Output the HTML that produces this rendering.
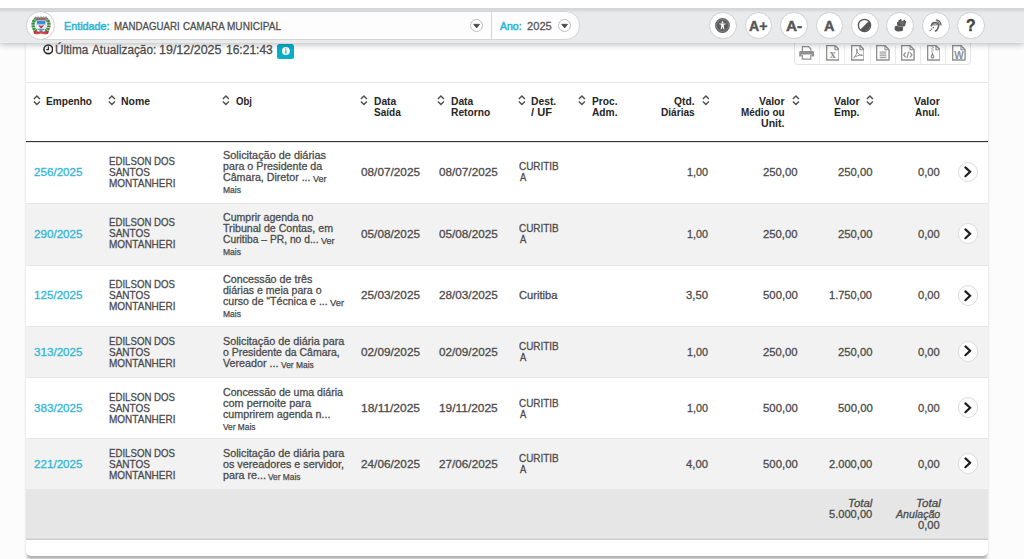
<!DOCTYPE html>
<html lang="pt-br"><head><meta charset="utf-8"><title>Diárias</title>
<style>
html,body{margin:0;padding:0}
body{width:1024px;height:559px;overflow:hidden;position:relative;background:#fcfcfc;font-family:'Liberation Sans',Arial,sans-serif}
.abs{position:absolute}
.t{position:absolute;white-space:nowrap;line-height:1;transform-origin:0 0;display:block}
#card{position:absolute;left:26px;top:40px;width:962px;height:515.5px;background:#fff;border-radius:0 0 5px 5px;box-shadow:0 0 4px rgba(0,0,0,.035),0 4px 3px -1.5px rgba(0,0,0,.3)}
#topwhite{position:absolute;left:0;top:0;width:1024px;height:8px;background:#fff}
#bar{position:absolute;left:0;top:8px;width:1024px;height:34.6px;background:linear-gradient(#d5d6d8 0,#d6d7d9 2px,#e6e7e8 4px,#e9eaeb 5.5px,#e9eaeb 100%);box-shadow:0 1px 7px rgba(0,0,0,.3)}
#pill{position:absolute;left:40px;top:10.8px;width:538px;height:26.9px;background:#fdfdfd;border:1px solid #d4d4d4;border-radius:0 14px 14px 0}
#pilldiv{position:absolute;left:491px;top:11.5px;width:1px;height:27.5px;background:#d4d4d4}
#logo{position:absolute;left:26px;top:11px;width:27px;height:27px;border-radius:50%;background:#fff;border:1px solid #cfcfcf}
.dd{position:absolute;top:18.8px;width:13px;height:13px}
.ac{position:absolute;top:11.7px;width:25.5px;height:25.5px;border-radius:50%;background:#fff;border:1px solid #cfcfcf}
.ac svg{position:absolute;left:0;top:0}
#exp{position:absolute;left:794.3px;top:40px;width:175px;height:23.5px;border:1px solid #e4e4e4;border-top:none;border-radius:0 0 4px 4px;background:#fff}
.exd{position:absolute;top:46px;width:1px;height:18px;background:#e9e9e9}
.ico{position:absolute;top:45.4px}
#info{position:absolute;left:277.3px;top:43.6px;width:16.5px;height:15.3px;border-radius:2.5px;background:#06aeca}
#info svg{position:absolute;left:4.55px;top:3.45px}
#thtop{position:absolute;left:26px;top:82px;width:962px;height:1px;background:#e6e6e6}
#thbot{position:absolute;left:26px;top:140.7px;width:962px;height:1.7px;background:#333}
.row{position:absolute;left:26px;width:962.3px;box-shadow:inset 0 1px 0 #e6e6e6}
#foot{position:absolute;left:26px;top:489px;width:962px;height:50.8px;background:#e6e6e6;box-shadow:inset 0 -1px 0 #cdcdcd,inset 0 -2px 0 #dadada}
.go{position:absolute;left:957.5px;width:18.6px;height:18.6px;border-radius:50%;background:#fff;border:1.5px solid #dcdcdc}
.go svg{position:absolute;left:-1.5px;top:-1.5px}
.sort{position:absolute;top:95.4px}

</style></head>
<body>
<div id="card"></div>
<div id="exp"></div>
<div id="info"><svg viewBox="0 0 8 8" width="7.8" height="7.8"><circle cx="4" cy="4" r="4" fill="#fff"/><circle cx="3.9" cy="2.0" r="0.65" fill="#06aeca"/><path d="M3.1 3.4 H4.5 V5.6 H5.0 V6.3 H3.0 V5.6 H3.5 V4.1 H3.1 Z" fill="#06aeca"/></svg></div>
<div id="thtop"></div>
<div class="row" style="top:142px;height:61px;background:#fff"></div>
<div class="go" style="top:161.85px"><svg viewBox="0 0 21.6 21.6" width="21.6" height="21.6"><path d="M8.4 6.4 L13.1 10.8 L8.4 15.2" fill="none" stroke="#1f1f1f" stroke-width="2.2" stroke-linecap="round" stroke-linejoin="miter"/></svg></div>
<div class="row" style="top:203px;height:62px;background:#f2f2f2"></div>
<div class="go" style="top:223.35px"><svg viewBox="0 0 21.6 21.6" width="21.6" height="21.6"><path d="M8.4 6.4 L13.1 10.8 L8.4 15.2" fill="none" stroke="#1f1f1f" stroke-width="2.2" stroke-linecap="round" stroke-linejoin="miter"/></svg></div>
<div class="row" style="top:265px;height:61px;background:#fff"></div>
<div class="go" style="top:285.23px"><svg viewBox="0 0 21.6 21.6" width="21.6" height="21.6"><path d="M8.4 6.4 L13.1 10.8 L8.4 15.2" fill="none" stroke="#1f1f1f" stroke-width="2.2" stroke-linecap="round" stroke-linejoin="miter"/></svg></div>
<div class="row" style="top:326px;height:51px;background:#f2f2f2"></div>
<div class="go" style="top:340.98px"><svg viewBox="0 0 21.6 21.6" width="21.6" height="21.6"><path d="M8.4 6.4 L13.1 10.8 L8.4 15.2" fill="none" stroke="#1f1f1f" stroke-width="2.2" stroke-linecap="round" stroke-linejoin="miter"/></svg></div>
<div class="row" style="top:377px;height:61px;background:#fff"></div>
<div class="go" style="top:397.23px"><svg viewBox="0 0 21.6 21.6" width="21.6" height="21.6"><path d="M8.4 6.4 L13.1 10.8 L8.4 15.2" fill="none" stroke="#1f1f1f" stroke-width="2.2" stroke-linecap="round" stroke-linejoin="miter"/></svg></div>
<div class="row" style="top:438px;height:51px;background:#f2f2f2"></div>
<div class="go" style="top:452.98px"><svg viewBox="0 0 21.6 21.6" width="21.6" height="21.6"><path d="M8.4 6.4 L13.1 10.8 L8.4 15.2" fill="none" stroke="#1f1f1f" stroke-width="2.2" stroke-linecap="round" stroke-linejoin="miter"/></svg></div>
<div id="foot"></div>
<div id="thbot"></div>
<svg class="sort" style="left:32.95px" viewBox="0 0 7.8 10.4" width="7.8" height="10.4"><path d="M0.9 4.0 L3.9 1.0 L6.9 4.0 M0.9 6.4 L3.9 9.4 L6.9 6.4" fill="none" stroke="#4d4d4d" stroke-width="1.4"/></svg>
<svg class="sort" style="left:107.95px" viewBox="0 0 7.8 10.4" width="7.8" height="10.4"><path d="M0.9 4.0 L3.9 1.0 L6.9 4.0 M0.9 6.4 L3.9 9.4 L6.9 6.4" fill="none" stroke="#4d4d4d" stroke-width="1.4"/></svg>
<svg class="sort" style="left:221.70px" viewBox="0 0 7.8 10.4" width="7.8" height="10.4"><path d="M0.9 4.0 L3.9 1.0 L6.9 4.0 M0.9 6.4 L3.9 9.4 L6.9 6.4" fill="none" stroke="#4d4d4d" stroke-width="1.4"/></svg>
<svg class="sort" style="left:360.20px" viewBox="0 0 7.8 10.4" width="7.8" height="10.4"><path d="M0.9 4.0 L3.9 1.0 L6.9 4.0 M0.9 6.4 L3.9 9.4 L6.9 6.4" fill="none" stroke="#4d4d4d" stroke-width="1.4"/></svg>
<svg class="sort" style="left:437.20px" viewBox="0 0 7.8 10.4" width="7.8" height="10.4"><path d="M0.9 4.0 L3.9 1.0 L6.9 4.0 M0.9 6.4 L3.9 9.4 L6.9 6.4" fill="none" stroke="#4d4d4d" stroke-width="1.4"/></svg>
<svg class="sort" style="left:517.95px" viewBox="0 0 7.8 10.4" width="7.8" height="10.4"><path d="M0.9 4.0 L3.9 1.0 L6.9 4.0 M0.9 6.4 L3.9 9.4 L6.9 6.4" fill="none" stroke="#4d4d4d" stroke-width="1.4"/></svg>
<svg class="sort" style="left:578.45px" viewBox="0 0 7.8 10.4" width="7.8" height="10.4"><path d="M0.9 4.0 L3.9 1.0 L6.9 4.0 M0.9 6.4 L3.9 9.4 L6.9 6.4" fill="none" stroke="#4d4d4d" stroke-width="1.4"/></svg>
<svg class="sort" style="left:701.70px" viewBox="0 0 7.8 10.4" width="7.8" height="10.4"><path d="M0.9 4.0 L3.9 1.0 L6.9 4.0 M0.9 6.4 L3.9 9.4 L6.9 6.4" fill="none" stroke="#4d4d4d" stroke-width="1.4"/></svg>
<svg class="sort" style="left:792.20px" viewBox="0 0 7.8 10.4" width="7.8" height="10.4"><path d="M0.9 4.0 L3.9 1.0 L6.9 4.0 M0.9 6.4 L3.9 9.4 L6.9 6.4" fill="none" stroke="#4d4d4d" stroke-width="1.4"/></svg>
<svg class="sort" style="left:866.45px" viewBox="0 0 7.8 10.4" width="7.8" height="10.4"><path d="M0.9 4.0 L3.9 1.0 L6.9 4.0 M0.9 6.4 L3.9 9.4 L6.9 6.4" fill="none" stroke="#4d4d4d" stroke-width="1.4"/></svg>
<div class="exd" style="left:818.9px"></div>
<div class="exd" style="left:843.9px"></div>
<div class="exd" style="left:869.6px"></div>
<div class="exd" style="left:895.0px"></div>
<div class="exd" style="left:920.2px"></div>
<div class="exd" style="left:945.4px"></div>
<svg class="ico" style="left:799.40px;top:46.2px" viewBox="0 0 15.2 14" width="15.2" height="14">
<path d="M3.4 5.4 V0.7 H9.6 L11.8 2.9 V5.4" fill="#fff" stroke="#909090" stroke-width="1.2"/>
<path d="M1.6 5.0 H13.6 Q15.0 5.0 15.0 6.4 V10.6 H12.6 V8.6 H2.6 V10.6 H0.2 V6.4 Q0.2 5.0 1.6 5.0 Z" fill="#909090"/>
<path d="M3.4 9.0 V13.2 H11.8 V9.0" fill="#fff" stroke="#909090" stroke-width="1.2"/></svg>
<svg class="ico" style="left:825.55px" viewBox="0 0 13.7 15.6" width="13.7" height="15.6"><path d="M0.6 0.6 H9.0 L13.1 4.7 V15.0 H0.6 Z" fill="#fff" stroke="#909090" stroke-width="1.4" stroke-linejoin="round"/><path d="M9.0 0.6 V4.7 H13.1" fill="none" stroke="#909090" stroke-width="1.15"/><text x="6.7" y="13.0" font-family="Liberation Serif,serif" font-weight="700" font-size="12" text-anchor="middle" fill="#909090">x</text></svg>
<svg class="ico" style="left:850.55px" viewBox="0 0 13.7 15.6" width="13.7" height="15.6"><path d="M0.6 0.6 H9.0 L13.1 4.7 V15.0 H0.6 Z" fill="#fff" stroke="#909090" stroke-width="1.4" stroke-linejoin="round"/><path d="M9.0 0.6 V4.7 H13.1" fill="none" stroke="#909090" stroke-width="1.15"/><path d="M2.7 12.7 C4.6 11.4 6.2 8.3 6.3 4.6 C6.3 3.6 5.4 3.7 5.5 4.8 C5.8 8.0 8.3 10.3 11.2 10.6 C12.0 10.6 11.8 9.8 10.9 9.9 C8.3 10.0 4.8 11.2 2.7 12.7 Z" fill="none" stroke="#909090" stroke-width="1.0"/></svg>
<svg class="ico" style="left:876.05px" viewBox="0 0 13.7 15.6" width="13.7" height="15.6"><path d="M0.6 0.6 H9.0 L13.1 4.7 V15.0 H0.6 Z" fill="#fff" stroke="#909090" stroke-width="1.4" stroke-linejoin="round"/><path d="M9.0 0.6 V4.7 H13.1" fill="none" stroke="#909090" stroke-width="1.15"/><path d="M3.6 7.0 H10.3 M3.6 8.9 H10.3 M3.6 10.8 H10.3 M3.6 12.7 H10.3" stroke="#909090" stroke-width="1.0"/></svg>
<svg class="ico" style="left:901.35px" viewBox="0 0 13.7 15.6" width="13.7" height="15.6"><path d="M0.6 0.6 H9.0 L13.1 4.7 V15.0 H0.6 Z" fill="#fff" stroke="#909090" stroke-width="1.4" stroke-linejoin="round"/><path d="M9.0 0.6 V4.7 H13.1" fill="none" stroke="#909090" stroke-width="1.15"/><path d="M4.7 7.4 L2.7 9.9 L4.7 12.4 M9.0 7.4 L11.0 9.9 L9.0 12.4 M7.7 6.7 L6.0 13.1" fill="none" stroke="#909090" stroke-width="1.25"/></svg>
<svg class="ico" style="left:926.55px" viewBox="0 0 13.7 15.6" width="13.7" height="15.6"><path d="M0.6 0.6 H9.0 L13.1 4.7 V15.0 H0.6 Z" fill="#fff" stroke="#909090" stroke-width="1.4" stroke-linejoin="round"/><path d="M9.0 0.6 V4.7 H13.1" fill="none" stroke="#909090" stroke-width="1.15"/><path d="M4.3 1.4 H5.5 M5.5 2.6 H6.7 M4.3 3.8 H5.5 M5.5 5.0 H6.7 M4.3 6.2 H5.5" stroke="#909090" stroke-width="1.0"/><path d="M5.5 6.8 L7.1 11.0 A1.8 1.8 0 1 1 3.9 11.0 Z" fill="#909090"/><circle cx="5.5" cy="11.6" r="0.7" fill="#fff"/></svg>
<svg class="ico" style="left:951.95px" viewBox="0 0 13.7 15.6" width="13.7" height="15.6"><path d="M0.6 0.6 H9.0 L13.1 4.7 V15.0 H0.6 Z" fill="#fff" stroke="#909090" stroke-width="1.4" stroke-linejoin="round"/><path d="M9.0 0.6 V4.7 H13.1" fill="none" stroke="#909090" stroke-width="1.15"/><text x="6.9" y="14.0" font-family="Liberation Sans,sans-serif" font-weight="700" font-size="10" text-anchor="middle" fill="#909090">W</text></svg><svg class="abs" style="left:42.6px;top:44.2px" viewBox="0 0 10.6 10.6" width="10.6" height="10.6"><circle cx="5.3" cy="5.3" r="4.35" fill="none" stroke="#2e2e2e" stroke-width="1.6"/><path d="M5.4 2.5 V5.7 H3.2" fill="none" stroke="#2e2e2e" stroke-width="1.25"/></svg>
<div id="bar"></div>
<div id="topwhite"></div>
<div id="pill"></div><div id="pilldiv"></div>
<div id="logo"><svg viewBox="0 0 28 28" width="28" height="28" style="position:absolute;left:-0.5px;top:-0.5px">
<g fill="none" stroke="#2f8f3e" stroke-width="3.4" stroke-dasharray="2.1 0.5"><path d="M9.4 6.6 C6.2 8.6 5.4 12.6 6.6 15.8 C7.3 17.6 8.6 18.8 10.4 19.4"/><path d="M18.6 6.6 C21.8 8.6 22.6 12.6 21.4 15.8 C20.7 17.6 19.4 18.8 17.6 19.4"/></g>
<g fill="#c7363b"><circle cx="6.6" cy="10.0" r="0.55"/><circle cx="21.4" cy="10.0" r="0.55"/><circle cx="6.4" cy="14.4" r="0.55"/><circle cx="21.6" cy="14.4" r="0.55"/></g>
<path d="M7.9 4.4 H9.3 V5.2 H10.5 V4.4 H12.0 V5.2 H13.2 V4.4 H14.8 V5.2 H16.0 V4.4 H17.5 V5.2 H18.7 V4.4 H20.1 V8.4 H7.9 Z" fill="#8b8b8b" transform="translate(-0.0 0)"/>
<path d="M9.4 7.0 H18.7" stroke="#c43c40" stroke-width="1.3" stroke-dasharray="1.5 0.9"/>
<path d="M9.7 8.7 H18.5 V14.8 C18.5 17.4 16.0 18.6 14.1 19.1 C12.2 18.6 9.7 17.4 9.7 14.8 Z" fill="#3a9bd8"/>
<path d="M10.3 10.3 H17.9" stroke="#2a6fae" stroke-width="1.1" stroke-dasharray="1.2 1"/>
<path d="M9.7 12.5 H18.5 V16.0 C18.2 16.3 18.0 16.5 17.7 16.7 H10.5 C10.2 16.5 10.0 16.3 9.7 16.0 Z" fill="#f6f8fa"/>
<path d="M11.5 13.3 C12.3 13.0 13.3 13.3 14.1 13.9 C14.9 13.3 15.9 13.0 16.7 13.3 C16.4 14.6 15.2 15.6 14.1 16.4 C13.0 15.6 11.8 14.6 11.5 13.3 Z" fill="#d32536"/>
<path d="M6.3 18.6 C8.6 20.0 11.6 19.7 14.1 19.0 C16.6 19.7 19.6 20.0 21.9 18.6 L21.3 21.4 C19.0 22.6 16.4 22.4 14.1 21.6 C11.8 22.4 9.2 22.6 6.9 21.4 Z" fill="#c8262f"/>
<path d="M8.6 21.0 C10.4 21.5 12.4 21.2 14.1 20.6 C15.8 21.2 17.8 21.5 19.6 21.0" fill="none" stroke="#e9a0a4" stroke-width="0.5"/>
</svg></div>
<svg class="dd" style="left:470.4px" viewBox="0 0 13 13"><circle cx="6.5" cy="6.5" r="6" fill="#fff" stroke="#bdbdbd" stroke-width="1"/><path d="M3.6 5.3 H9.6 L6.6 8.9 Z" fill="#444" stroke="#444" stroke-width="0.7" stroke-linejoin="round"/></svg><svg class="dd" style="left:558.0px" viewBox="0 0 13 13"><circle cx="6.5" cy="6.5" r="6" fill="#fff" stroke="#bdbdbd" stroke-width="1"/><path d="M3.6 5.3 H9.6 L6.6 8.9 Z" fill="#444" stroke="#444" stroke-width="0.7" stroke-linejoin="round"/></svg>
<div class="ac" style="left:709.10px"><svg viewBox="0 0 27 27" width="27" height="27" style="left:-1px;top:-1px"><circle cx="13.5" cy="13.5" r="7.4" fill="#5a5a5a"/><circle cx="13.5" cy="13.5" r="6.1" fill="none" stroke="#a3a3a3" stroke-width="0.6"/>
<g transform="translate(13.5 13.7) scale(0.84) translate(-13.5 -13.7)"><circle cx="13.5" cy="9.6" r="1.1" fill="#fff"/><path d="M9.6 11.2 L17.4 11.2 L17.4 12.1 L14.8 12.6 L15.7 17.9 L14.8 18.1 L13.5 15.0 L12.2 18.1 L11.3 17.9 L12.2 12.6 L9.6 12.1 Z" fill="#fff"/></g></svg></div>
<div class="ac" style="left:744.90px"></div>
<div class="ac" style="left:780.10px"></div>
<div class="ac" style="left:815.50px"></div>
<div class="ac" style="left:851.10px"><svg viewBox="0 0 27 27" width="27" height="27" style="left:-1px;top:-1px"><circle cx="13.5" cy="13.4" r="6.1" fill="#fff" stroke="#555" stroke-width="1.35"/><path d="M9.2 17.7 A6.1 6.1 0 0 0 17.8 9.1 Z" fill="#555"/></svg></div>
<div class="ac" style="left:886.40px"><svg viewBox="0 0 27 27" width="27" height="27" style="left:-1px;top:-1px"><g fill="#575757"><path d="M9.0 14.6 C8.3 15.6 8.4 17.6 9.4 18.5 C10.3 19.4 11.5 19.7 12.8 19.5 L16.4 19.0 C17.1 18.9 17.2 18.0 16.6 17.8 C17.3 17.6 17.4 16.7 16.8 16.5 C17.5 16.2 17.4 15.3 16.7 15.2 L16.9 14.4 L12.0 14.2 C11.0 13.6 9.8 13.8 9.0 14.6 Z"/>
<path d="M11.2 13.8 L10.9 10.8 C10.8 10.0 11.8 9.7 12.2 10.3 L12.4 8.4 C12.5 7.6 13.5 7.5 13.8 8.2 L14.2 7.4 C14.6 6.8 15.5 7.0 15.6 7.7 L15.9 9.5 L18.0 7.9 C18.7 7.4 19.5 8.2 19.0 8.9 L19.6 8.9 C20.1 8.9 20.3 9.4 20.1 9.8 L19.2 13.2 C19.0 14.1 18.4 14.5 17.6 14.6 Z"/></g>
<path d="M13.3 10.0 L17.2 13.2 M14.8 9.2 L18.2 12.0" stroke="#a5a5a5" stroke-width="0.5" fill="none"/></svg></div>
<div class="ac" style="left:922.00px"><svg viewBox="0 0 27 27" width="27" height="27" style="left:-1px;top:-1px"><g fill="none" stroke="#5a5a5a" stroke-linecap="round"><path d="M9.4 13.8 A3.7 3.7 0 0 1 16.7 13.6 C16.7 15.4 15.7 16.1 15.3 17.2 C14.9 18.4 14.3 19.0 13.3 19.0" stroke-width="1.45"/>
<path d="M10.9 13.4 A2.1 2.1 0 0 1 15.0 13.2" stroke-width="0.95" stroke="#777"/>
<path d="M14.3 7.9 A6.1 6.1 0 0 1 19.1 12.9" stroke-width="1.2"/><path d="M14.9 9.2 A4.95 4.95 0 0 1 17.85 12.7" stroke-width="0.8"/></g>
<g fill="#5a5a5a"><circle cx="12.9" cy="13.0" r="0.65"/><circle cx="8.2" cy="18.5" r="0.7"/><circle cx="9.75" cy="16.95" r="0.7"/><circle cx="11.4" cy="15.5" r="0.7"/></g></svg></div>
<div class="ac" style="left:957.40px"></div>
<span class="t" id="t0" style="left:63.70px;top:21.12px;font-size:11.2px;color:#2fb6d6;-webkit-text-stroke:0.55px #2fb6d6;transform:scaleX(0.9644);">Entidade:</span>
<span class="t" id="t1" style="left:114.10px;top:21.12px;font-size:11.2px;color:#4d4d4d;-webkit-text-stroke:0.28px #4d4d4d;transform:scaleX(0.8676);">MANDAGUARI</span>
<span class="t" id="t2" style="left:182.50px;top:21.12px;font-size:11.2px;color:#4d4d4d;-webkit-text-stroke:0.28px #4d4d4d;transform:scaleX(0.8710);">CAMARA</span>
<span class="t" id="t3" style="left:227.00px;top:21.12px;font-size:11.2px;color:#4d4d4d;-webkit-text-stroke:0.28px #4d4d4d;transform:scaleX(0.8986);">MUNICIPAL</span>
<span class="t" id="t4" style="left:500.10px;top:21.12px;font-size:11.2px;color:#2fb6d6;-webkit-text-stroke:0.55px #2fb6d6;transform:scaleX(0.9385);">Ano:</span>
<span class="t" id="t5" style="left:526.60px;top:21.12px;font-size:11.2px;color:#555;-webkit-text-stroke:0.28px #555;transform:scaleX(0.9964);">2025</span>
<span class="t" id="t6" style="left:55.40px;top:44.32px;font-size:12.5px;color:#4a4a4a;-webkit-text-stroke:0.28px #4a4a4a;transform:scaleX(0.9401);">Última</span>
<span class="t" id="t7" style="left:91.65px;top:44.32px;font-size:12.5px;color:#4a4a4a;-webkit-text-stroke:0.28px #4a4a4a;transform:scaleX(0.9433);">Atualização:</span>
<span class="t" id="t8" style="left:158.80px;top:44.32px;font-size:12.5px;color:#4a4a4a;-webkit-text-stroke:0.28px #4a4a4a;transform:scaleX(0.9990);">19/12/2025</span>
<span class="t" id="t9" style="left:225.50px;top:44.32px;font-size:12.5px;color:#4a4a4a;-webkit-text-stroke:0.28px #4a4a4a;transform:scaleX(0.9615);">16:21:43</span>
<span class="t" id="t10" style="left:749.10px;top:17.78px;font-size:15.5px;color:#555;font-weight:700;-webkit-text-stroke:0.45px #555;transform:scaleX(0.9086);">A+</span>
<span class="t" id="t11" style="left:785.60px;top:17.78px;font-size:15.5px;color:#555;font-weight:700;-webkit-text-stroke:0.45px #555;transform:scaleX(0.9903);">A-</span>
<span class="t" id="t12" style="left:823.90px;top:17.78px;font-size:15.5px;color:#555;font-weight:700;-webkit-text-stroke:0.45px #555;transform:scaleX(0.9372);">A</span>
<span class="t" id="t13" style="left:966.00px;top:17.21px;font-size:17px;color:#444;font-weight:700;-webkit-text-stroke:0.45px #444;transform:scaleX(0.9239);">?</span>
<span class="t" id="t14" style="left:46.40px;top:95.59px;font-size:11px;color:#262626;font-weight:700;transform:scaleX(0.9177);">Empenho</span>
<span class="t" id="t15" style="left:121.40px;top:95.59px;font-size:11px;color:#262626;font-weight:700;transform:scaleX(0.9489);">Nome</span>
<span class="t" id="t16" style="left:235.65px;top:95.59px;font-size:11px;color:#262626;font-weight:700;transform:scaleX(0.8722);">Obj</span>
<span class="t" id="t17" style="left:373.65px;top:95.59px;font-size:11px;color:#262626;font-weight:700;transform:scaleX(0.9332);">Data</span>
<span class="t" id="t18" style="left:373.65px;top:106.59px;font-size:11px;color:#262626;font-weight:700;transform:scaleX(0.9111);">Saída</span>
<span class="t" id="t19" style="left:450.65px;top:95.59px;font-size:11px;color:#262626;font-weight:700;transform:scaleX(0.9332);">Data</span>
<span class="t" id="t20" style="left:450.65px;top:106.59px;font-size:11px;color:#262626;font-weight:700;transform:scaleX(0.9307);">Retorno</span>
<span class="t" id="t21" style="left:531.40px;top:95.59px;font-size:11px;color:#262626;font-weight:700;transform:scaleX(0.9384);">Dest.</span>
<span class="t" id="t22" style="left:531.40px;top:106.59px;font-size:11px;color:#262626;font-weight:700;transform:scaleX(1.0105);">/ UF</span>
<span class="t" id="t23" style="left:592.40px;top:95.59px;font-size:11px;color:#262626;font-weight:700;transform:scaleX(0.9267);">Proc.</span>
<span class="t" id="t24" style="left:592.40px;top:106.59px;font-size:11px;color:#262626;font-weight:700;transform:scaleX(0.9273);">Adm.</span>
<span class="t" id="t25" style="left:674.20px;top:95.59px;font-size:11px;color:#262626;font-weight:700;transform:scaleX(0.9318);">Qtd.</span>
<span class="t" id="t26" style="left:660.95px;top:106.59px;font-size:11px;color:#262626;font-weight:700;transform:scaleX(0.9195);">Diárias</span>
<span class="t" id="t27" style="left:759.20px;top:95.59px;font-size:11px;color:#262626;font-weight:700;transform:scaleX(0.9477);">Valor</span>
<span class="t" id="t28" style="left:741.20px;top:106.59px;font-size:11px;color:#262626;font-weight:700;transform:scaleX(0.9010);">Médio ou</span>
<span class="t" id="t29" style="left:761.20px;top:117.59px;font-size:11px;color:#262626;font-weight:700;transform:scaleX(0.9610);">Unit.</span>
<span class="t" id="t30" style="left:833.95px;top:95.59px;font-size:11px;color:#262626;font-weight:700;transform:scaleX(0.9477);">Valor</span>
<span class="t" id="t31" style="left:833.95px;top:106.59px;font-size:11px;color:#262626;font-weight:700;transform:scaleX(0.9477);">Emp.</span>
<span class="t" id="t32" style="left:914.20px;top:95.59px;font-size:11px;color:#262626;font-weight:700;transform:scaleX(0.9570);">Valor</span>
<span class="t" id="t33" style="left:915.20px;top:106.59px;font-size:11px;color:#262626;font-weight:700;transform:scaleX(0.9000);">Anul.</span>
<span class="t" id="t34" style="left:34.40px;top:167.09px;font-size:11px;color:#2fb6d6;-webkit-text-stroke:0.28px #2fb6d6;transform:scaleX(1.0569);">256/2025</span>
<span class="t" id="t35" style="left:109.40px;top:156.68px;font-size:10.3px;color:#4b4b4b;-webkit-text-stroke:0.28px #4b4b4b;transform:scaleX(0.9376);">EDILSON DOS</span>
<span class="t" id="t36" style="left:109.40px;top:167.68px;font-size:10.3px;color:#4b4b4b;-webkit-text-stroke:0.28px #4b4b4b;transform:scaleX(0.9726);">SANTOS</span>
<span class="t" id="t37" style="left:109.40px;top:178.68px;font-size:10.3px;color:#4b4b4b;-webkit-text-stroke:0.28px #4b4b4b;transform:scaleX(0.9715);">MONTANHERI</span>
<span class="t" id="t38" style="left:223.40px;top:151.18px;font-size:10.3px;color:#4b4b4b;-webkit-text-stroke:0.28px #4b4b4b;transform:scaleX(1.0584);">Solicitação de diárias</span>
<span class="t" id="t39" style="left:223.40px;top:162.18px;font-size:10.3px;color:#4b4b4b;-webkit-text-stroke:0.28px #4b4b4b;transform:scaleX(1.0381);">para o Presidente da</span>
<span class="t" id="t40" style="left:223.40px;top:173.18px;font-size:10.3px;color:#4b4b4b;-webkit-text-stroke:0.28px #4b4b4b;transform:scaleX(1.0332);">Câmara, Diretor ...</span>
<span class="t" id="t41" style="left:312.90px;top:175.34px;font-size:8.7px;color:#4b4b4b;-webkit-text-stroke:0.25px #4b4b4b;transform:scaleX(1.0347);">Ver</span>
<span class="t" id="t42" style="left:223.40px;top:186.34px;font-size:8.7px;color:#4b4b4b;-webkit-text-stroke:0.25px #4b4b4b;transform:scaleX(0.9813);">Mais</span>
<span class="t" id="t43" style="left:361.40px;top:167.09px;font-size:11px;color:#4b4b4b;-webkit-text-stroke:0.28px #4b4b4b;transform:scaleX(1.0715);">08/07/2025</span>
<span class="t" id="t44" style="left:438.65px;top:167.09px;font-size:11px;color:#4b4b4b;-webkit-text-stroke:0.28px #4b4b4b;transform:scaleX(1.0670);">08/07/2025</span>
<span class="t" id="t45" style="left:518.90px;top:162.18px;font-size:10.3px;color:#4b4b4b;-webkit-text-stroke:0.28px #4b4b4b;transform:scaleX(0.9647);">CURITIB</span>
<span class="t" id="t46" style="left:519.50px;top:173.18px;font-size:10.3px;color:#4b4b4b;-webkit-text-stroke:0.28px #4b4b4b;transform:scaleX(0.9164);">A</span>
<span class="t" id="t47" style="left:686.70px;top:167.09px;font-size:11px;color:#4b4b4b;-webkit-text-stroke:0.28px #4b4b4b;transform:scaleX(0.9803);">1,00</span>
<span class="t" id="t48" style="left:763.10px;top:167.09px;font-size:11px;color:#4b4b4b;-webkit-text-stroke:0.28px #4b4b4b;transform:scaleX(1.0280);">250,00</span>
<span class="t" id="t49" style="left:837.85px;top:167.09px;font-size:11px;color:#4b4b4b;-webkit-text-stroke:0.28px #4b4b4b;transform:scaleX(1.0280);">250,00</span>
<span class="t" id="t50" style="left:918.45px;top:167.09px;font-size:11px;color:#4b4b4b;-webkit-text-stroke:0.28px #4b4b4b;transform:scaleX(1.0153);">0,00</span>
<span class="t" id="t51" style="left:34.40px;top:228.59px;font-size:11px;color:#2fb6d6;-webkit-text-stroke:0.28px #2fb6d6;transform:scaleX(1.0569);">290/2025</span>
<span class="t" id="t52" style="left:109.40px;top:218.18px;font-size:10.3px;color:#4b4b4b;-webkit-text-stroke:0.28px #4b4b4b;transform:scaleX(0.9376);">EDILSON DOS</span>
<span class="t" id="t53" style="left:109.40px;top:229.18px;font-size:10.3px;color:#4b4b4b;-webkit-text-stroke:0.28px #4b4b4b;transform:scaleX(0.9726);">SANTOS</span>
<span class="t" id="t54" style="left:109.40px;top:240.18px;font-size:10.3px;color:#4b4b4b;-webkit-text-stroke:0.28px #4b4b4b;transform:scaleX(0.9715);">MONTANHERI</span>
<span class="t" id="t55" style="left:223.40px;top:212.68px;font-size:10.3px;color:#4b4b4b;-webkit-text-stroke:0.28px #4b4b4b;transform:scaleX(1.0266);">Cumprir agenda no</span>
<span class="t" id="t56" style="left:223.40px;top:223.68px;font-size:10.3px;color:#4b4b4b;-webkit-text-stroke:0.28px #4b4b4b;transform:scaleX(1.0314);">Tribunal de Contas, em</span>
<span class="t" id="t57" style="left:223.40px;top:234.68px;font-size:10.3px;color:#4b4b4b;-webkit-text-stroke:0.28px #4b4b4b;transform:scaleX(0.9992);">Curitiba – PR, no d...</span>
<span class="t" id="t58" style="left:320.90px;top:236.84px;font-size:8.7px;color:#4b4b4b;-webkit-text-stroke:0.25px #4b4b4b;transform:scaleX(1.0347);">Ver</span>
<span class="t" id="t59" style="left:223.40px;top:247.84px;font-size:8.7px;color:#4b4b4b;-webkit-text-stroke:0.25px #4b4b4b;transform:scaleX(0.9813);">Mais</span>
<span class="t" id="t60" style="left:361.40px;top:228.59px;font-size:11px;color:#4b4b4b;-webkit-text-stroke:0.28px #4b4b4b;transform:scaleX(1.0715);">05/08/2025</span>
<span class="t" id="t61" style="left:438.65px;top:228.59px;font-size:11px;color:#4b4b4b;-webkit-text-stroke:0.28px #4b4b4b;transform:scaleX(1.0670);">05/08/2025</span>
<span class="t" id="t62" style="left:518.90px;top:223.68px;font-size:10.3px;color:#4b4b4b;-webkit-text-stroke:0.28px #4b4b4b;transform:scaleX(0.9647);">CURITIB</span>
<span class="t" id="t63" style="left:519.50px;top:234.68px;font-size:10.3px;color:#4b4b4b;-webkit-text-stroke:0.28px #4b4b4b;transform:scaleX(0.9164);">A</span>
<span class="t" id="t64" style="left:686.70px;top:228.59px;font-size:11px;color:#4b4b4b;-webkit-text-stroke:0.28px #4b4b4b;transform:scaleX(0.9803);">1,00</span>
<span class="t" id="t65" style="left:763.10px;top:228.59px;font-size:11px;color:#4b4b4b;-webkit-text-stroke:0.28px #4b4b4b;transform:scaleX(1.0280);">250,00</span>
<span class="t" id="t66" style="left:837.85px;top:228.59px;font-size:11px;color:#4b4b4b;-webkit-text-stroke:0.28px #4b4b4b;transform:scaleX(1.0280);">250,00</span>
<span class="t" id="t67" style="left:918.45px;top:228.59px;font-size:11px;color:#4b4b4b;-webkit-text-stroke:0.28px #4b4b4b;transform:scaleX(1.0153);">0,00</span>
<span class="t" id="t68" style="left:34.40px;top:290.46px;font-size:11px;color:#2fb6d6;-webkit-text-stroke:0.28px #2fb6d6;transform:scaleX(1.0569);">125/2025</span>
<span class="t" id="t69" style="left:109.40px;top:280.06px;font-size:10.3px;color:#4b4b4b;-webkit-text-stroke:0.28px #4b4b4b;transform:scaleX(0.9376);">EDILSON DOS</span>
<span class="t" id="t70" style="left:109.40px;top:291.06px;font-size:10.3px;color:#4b4b4b;-webkit-text-stroke:0.28px #4b4b4b;transform:scaleX(0.9726);">SANTOS</span>
<span class="t" id="t71" style="left:109.40px;top:302.06px;font-size:10.3px;color:#4b4b4b;-webkit-text-stroke:0.28px #4b4b4b;transform:scaleX(0.9715);">MONTANHERI</span>
<span class="t" id="t72" style="left:223.40px;top:274.56px;font-size:10.3px;color:#4b4b4b;-webkit-text-stroke:0.28px #4b4b4b;transform:scaleX(1.0395);">Concessão de três</span>
<span class="t" id="t73" style="left:223.40px;top:285.56px;font-size:10.3px;color:#4b4b4b;-webkit-text-stroke:0.28px #4b4b4b;transform:scaleX(1.0244);">diárias e meia para o</span>
<span class="t" id="t74" style="left:223.40px;top:296.56px;font-size:10.3px;color:#4b4b4b;-webkit-text-stroke:0.28px #4b4b4b;transform:scaleX(1.0282);">curso de “Técnica e ...</span>
<span class="t" id="t75" style="left:329.90px;top:298.71px;font-size:8.7px;color:#4b4b4b;-webkit-text-stroke:0.25px #4b4b4b;transform:scaleX(1.0731);">Ver</span>
<span class="t" id="t76" style="left:223.40px;top:309.71px;font-size:8.7px;color:#4b4b4b;-webkit-text-stroke:0.25px #4b4b4b;transform:scaleX(0.9813);">Mais</span>
<span class="t" id="t77" style="left:361.40px;top:290.46px;font-size:11px;color:#4b4b4b;-webkit-text-stroke:0.28px #4b4b4b;transform:scaleX(1.0715);">25/03/2025</span>
<span class="t" id="t78" style="left:438.65px;top:290.46px;font-size:11px;color:#4b4b4b;-webkit-text-stroke:0.28px #4b4b4b;transform:scaleX(1.0670);">28/03/2025</span>
<span class="t" id="t79" style="left:518.90px;top:291.06px;font-size:10.3px;color:#4b4b4b;-webkit-text-stroke:0.28px #4b4b4b;transform:scaleX(1.0850);">Curitiba</span>
<span class="t" id="t80" style="left:685.70px;top:290.46px;font-size:11px;color:#4b4b4b;-webkit-text-stroke:0.28px #4b4b4b;transform:scaleX(1.0270);">3,50</span>
<span class="t" id="t81" style="left:762.90px;top:290.46px;font-size:11px;color:#4b4b4b;-webkit-text-stroke:0.28px #4b4b4b;transform:scaleX(1.0340);">500,00</span>
<span class="t" id="t82" style="left:829.45px;top:290.46px;font-size:11px;color:#4b4b4b;-webkit-text-stroke:0.28px #4b4b4b;transform:scaleX(1.0040);">1.750,00</span>
<span class="t" id="t83" style="left:918.45px;top:290.46px;font-size:11px;color:#4b4b4b;-webkit-text-stroke:0.28px #4b4b4b;transform:scaleX(1.0153);">0,00</span>
<span class="t" id="t84" style="left:34.40px;top:347.21px;font-size:11px;color:#2fb6d6;-webkit-text-stroke:0.28px #2fb6d6;transform:scaleX(1.0569);">313/2025</span>
<span class="t" id="t85" style="left:109.40px;top:336.81px;font-size:10.3px;color:#4b4b4b;-webkit-text-stroke:0.28px #4b4b4b;transform:scaleX(0.9376);">EDILSON DOS</span>
<span class="t" id="t86" style="left:109.40px;top:347.81px;font-size:10.3px;color:#4b4b4b;-webkit-text-stroke:0.28px #4b4b4b;transform:scaleX(0.9726);">SANTOS</span>
<span class="t" id="t87" style="left:109.40px;top:358.81px;font-size:10.3px;color:#4b4b4b;-webkit-text-stroke:0.28px #4b4b4b;transform:scaleX(0.9715);">MONTANHERI</span>
<span class="t" id="t88" style="left:223.40px;top:336.81px;font-size:10.3px;color:#4b4b4b;-webkit-text-stroke:0.28px #4b4b4b;transform:scaleX(1.0486);">Solicitação de diária para</span>
<span class="t" id="t89" style="left:223.40px;top:347.81px;font-size:10.3px;color:#4b4b4b;-webkit-text-stroke:0.28px #4b4b4b;transform:scaleX(1.0198);">o Presidente da Câmara,</span>
<span class="t" id="t90" style="left:223.40px;top:358.81px;font-size:10.3px;color:#4b4b4b;-webkit-text-stroke:0.28px #4b4b4b;transform:scaleX(1.0426);">Vereador ...</span>
<span class="t" id="t91" style="left:281.15px;top:360.96px;font-size:8.7px;color:#4b4b4b;-webkit-text-stroke:0.25px #4b4b4b;transform:scaleX(0.9690);">Ver Mais</span>
<span class="t" id="t92" style="left:361.40px;top:347.21px;font-size:11px;color:#4b4b4b;-webkit-text-stroke:0.28px #4b4b4b;transform:scaleX(1.0715);">02/09/2025</span>
<span class="t" id="t93" style="left:438.65px;top:347.21px;font-size:11px;color:#4b4b4b;-webkit-text-stroke:0.28px #4b4b4b;transform:scaleX(1.0670);">02/09/2025</span>
<span class="t" id="t94" style="left:518.90px;top:342.31px;font-size:10.3px;color:#4b4b4b;-webkit-text-stroke:0.28px #4b4b4b;transform:scaleX(0.9647);">CURITIB</span>
<span class="t" id="t95" style="left:519.50px;top:353.31px;font-size:10.3px;color:#4b4b4b;-webkit-text-stroke:0.28px #4b4b4b;transform:scaleX(0.9164);">A</span>
<span class="t" id="t96" style="left:686.70px;top:347.21px;font-size:11px;color:#4b4b4b;-webkit-text-stroke:0.28px #4b4b4b;transform:scaleX(0.9803);">1,00</span>
<span class="t" id="t97" style="left:763.10px;top:347.21px;font-size:11px;color:#4b4b4b;-webkit-text-stroke:0.28px #4b4b4b;transform:scaleX(1.0280);">250,00</span>
<span class="t" id="t98" style="left:837.85px;top:347.21px;font-size:11px;color:#4b4b4b;-webkit-text-stroke:0.28px #4b4b4b;transform:scaleX(1.0280);">250,00</span>
<span class="t" id="t99" style="left:918.45px;top:347.21px;font-size:11px;color:#4b4b4b;-webkit-text-stroke:0.28px #4b4b4b;transform:scaleX(1.0153);">0,00</span>
<span class="t" id="t100" style="left:34.40px;top:403.46px;font-size:11px;color:#2fb6d6;-webkit-text-stroke:0.28px #2fb6d6;transform:scaleX(1.0569);">383/2025</span>
<span class="t" id="t101" style="left:109.40px;top:393.06px;font-size:10.3px;color:#4b4b4b;-webkit-text-stroke:0.28px #4b4b4b;transform:scaleX(0.9376);">EDILSON DOS</span>
<span class="t" id="t102" style="left:109.40px;top:404.06px;font-size:10.3px;color:#4b4b4b;-webkit-text-stroke:0.28px #4b4b4b;transform:scaleX(0.9726);">SANTOS</span>
<span class="t" id="t103" style="left:109.40px;top:415.06px;font-size:10.3px;color:#4b4b4b;-webkit-text-stroke:0.28px #4b4b4b;transform:scaleX(0.9715);">MONTANHERI</span>
<span class="t" id="t104" style="left:223.40px;top:387.56px;font-size:10.3px;color:#4b4b4b;-webkit-text-stroke:0.28px #4b4b4b;transform:scaleX(1.0277);">Concessão de uma diária</span>
<span class="t" id="t105" style="left:223.40px;top:398.56px;font-size:10.3px;color:#4b4b4b;-webkit-text-stroke:0.28px #4b4b4b;transform:scaleX(1.0602);">com pernoite para</span>
<span class="t" id="t106" style="left:223.40px;top:409.56px;font-size:10.3px;color:#4b4b4b;-webkit-text-stroke:0.28px #4b4b4b;transform:scaleX(1.0434);">cumprirem agenda n...</span>
<span class="t" id="t107" style="left:223.40px;top:422.71px;font-size:8.7px;color:#4b4b4b;-webkit-text-stroke:0.25px #4b4b4b;transform:scaleX(0.9616);">Ver Mais</span>
<span class="t" id="t108" style="left:361.40px;top:403.46px;font-size:11px;color:#4b4b4b;-webkit-text-stroke:0.28px #4b4b4b;transform:scaleX(1.0876);">18/11/2025</span>
<span class="t" id="t109" style="left:438.65px;top:403.46px;font-size:11px;color:#4b4b4b;-webkit-text-stroke:0.28px #4b4b4b;transform:scaleX(1.0829);">19/11/2025</span>
<span class="t" id="t110" style="left:518.90px;top:398.56px;font-size:10.3px;color:#4b4b4b;-webkit-text-stroke:0.28px #4b4b4b;transform:scaleX(0.9647);">CURITIB</span>
<span class="t" id="t111" style="left:519.50px;top:409.56px;font-size:10.3px;color:#4b4b4b;-webkit-text-stroke:0.28px #4b4b4b;transform:scaleX(0.9164);">A</span>
<span class="t" id="t112" style="left:686.70px;top:403.46px;font-size:11px;color:#4b4b4b;-webkit-text-stroke:0.28px #4b4b4b;transform:scaleX(0.9803);">1,00</span>
<span class="t" id="t113" style="left:762.90px;top:403.46px;font-size:11px;color:#4b4b4b;-webkit-text-stroke:0.28px #4b4b4b;transform:scaleX(1.0340);">500,00</span>
<span class="t" id="t114" style="left:837.65px;top:403.46px;font-size:11px;color:#4b4b4b;-webkit-text-stroke:0.28px #4b4b4b;transform:scaleX(1.0340);">500,00</span>
<span class="t" id="t115" style="left:918.45px;top:403.46px;font-size:11px;color:#4b4b4b;-webkit-text-stroke:0.28px #4b4b4b;transform:scaleX(1.0153);">0,00</span>
<span class="t" id="t116" style="left:34.40px;top:459.21px;font-size:11px;color:#2fb6d6;-webkit-text-stroke:0.28px #2fb6d6;transform:scaleX(1.0569);">221/2025</span>
<span class="t" id="t117" style="left:109.40px;top:448.81px;font-size:10.3px;color:#4b4b4b;-webkit-text-stroke:0.28px #4b4b4b;transform:scaleX(0.9376);">EDILSON DOS</span>
<span class="t" id="t118" style="left:109.40px;top:459.81px;font-size:10.3px;color:#4b4b4b;-webkit-text-stroke:0.28px #4b4b4b;transform:scaleX(0.9726);">SANTOS</span>
<span class="t" id="t119" style="left:109.40px;top:470.81px;font-size:10.3px;color:#4b4b4b;-webkit-text-stroke:0.28px #4b4b4b;transform:scaleX(0.9715);">MONTANHERI</span>
<span class="t" id="t120" style="left:223.40px;top:448.81px;font-size:10.3px;color:#4b4b4b;-webkit-text-stroke:0.28px #4b4b4b;transform:scaleX(1.0486);">Solicitação de diária para</span>
<span class="t" id="t121" style="left:223.40px;top:459.81px;font-size:10.3px;color:#4b4b4b;-webkit-text-stroke:0.28px #4b4b4b;transform:scaleX(1.0465);">os vereadores e servidor,</span>
<span class="t" id="t122" style="left:223.40px;top:470.81px;font-size:10.3px;color:#4b4b4b;-webkit-text-stroke:0.28px #4b4b4b;transform:scaleX(1.0432);">para re...</span>
<span class="t" id="t123" style="left:268.40px;top:472.96px;font-size:8.7px;color:#4b4b4b;-webkit-text-stroke:0.25px #4b4b4b;transform:scaleX(0.9616);">Ver Mais</span>
<span class="t" id="t124" style="left:361.40px;top:459.21px;font-size:11px;color:#4b4b4b;-webkit-text-stroke:0.28px #4b4b4b;transform:scaleX(1.0715);">24/06/2025</span>
<span class="t" id="t125" style="left:438.65px;top:459.21px;font-size:11px;color:#4b4b4b;-webkit-text-stroke:0.28px #4b4b4b;transform:scaleX(1.0670);">27/06/2025</span>
<span class="t" id="t126" style="left:518.90px;top:454.31px;font-size:10.3px;color:#4b4b4b;-webkit-text-stroke:0.28px #4b4b4b;transform:scaleX(0.9647);">CURITIB</span>
<span class="t" id="t127" style="left:519.50px;top:465.31px;font-size:10.3px;color:#4b4b4b;-webkit-text-stroke:0.28px #4b4b4b;transform:scaleX(0.9164);">A</span>
<span class="t" id="t128" style="left:685.70px;top:459.21px;font-size:11px;color:#4b4b4b;-webkit-text-stroke:0.28px #4b4b4b;transform:scaleX(1.0270);">4,00</span>
<span class="t" id="t129" style="left:762.90px;top:459.21px;font-size:11px;color:#4b4b4b;-webkit-text-stroke:0.28px #4b4b4b;transform:scaleX(1.0340);">500,00</span>
<span class="t" id="t130" style="left:829.20px;top:459.21px;font-size:11px;color:#4b4b4b;-webkit-text-stroke:0.28px #4b4b4b;transform:scaleX(1.0099);">2.000,00</span>
<span class="t" id="t131" style="left:918.45px;top:459.21px;font-size:11px;color:#4b4b4b;-webkit-text-stroke:0.28px #4b4b4b;transform:scaleX(1.0153);">0,00</span>
<span class="t" id="t132" style="left:848.45px;top:498.53px;font-size:10.3px;color:#4b4b4b;-webkit-text-stroke:0.28px #4b4b4b;font-style:italic;transform:scaleX(1.1046);">Total</span>
<span class="t" id="t133" style="left:829.20px;top:509.19px;font-size:11px;color:#4b4b4b;-webkit-text-stroke:0.28px #4b4b4b;transform:scaleX(1.0099);">5.000,00</span>
<span class="t" id="t134" style="left:915.95px;top:498.53px;font-size:10.3px;color:#4b4b4b;-webkit-text-stroke:0.28px #4b4b4b;font-style:italic;transform:scaleX(1.1274);">Total</span>
<span class="t" id="t135" style="left:896.45px;top:509.78px;font-size:10.3px;color:#4b4b4b;-webkit-text-stroke:0.28px #4b4b4b;font-style:italic;transform:scaleX(1.0306);">Anulação</span>
<span class="t" id="t136" style="left:918.45px;top:520.44px;font-size:11px;color:#4b4b4b;-webkit-text-stroke:0.28px #4b4b4b;transform:scaleX(1.0153);">0,00</span>
</body></html>
